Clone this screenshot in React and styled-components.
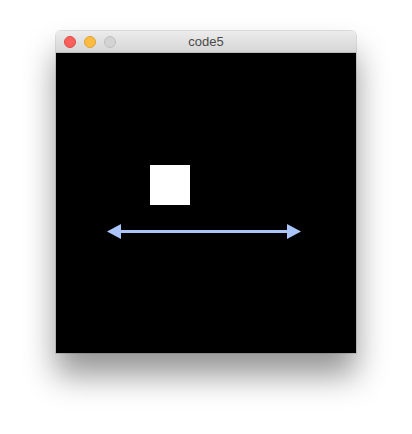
import React from 'react';
import styled, { createGlobalStyle } from 'styled-components';

const GlobalStyle = createGlobalStyle`
  html, body {
    margin: 0;
    padding: 0;
    background: #ffffff;
  }
`;

const Page = styled.div`
  width: 412px;
  height: 434px;
  display: flex;
  justify-content: center;
  align-items: flex-start;
  padding-top: 31px;
  box-sizing: border-box;
`;

const Window = styled.div`
  width: 300px;
  display: flex;
  flex-direction: column;
  border-radius: 5px 5px 0 0;
  box-shadow: 0 0 0 1px rgba(0, 0, 0, 0.12), 0 22px 32px rgba(0, 0, 0, 0.42);
`;

const TitleBar = styled.div`
  position: relative;
  height: 22px;
  display: flex;
  align-items: center;
  justify-content: center;
  border-radius: 5px 5px 0 0;
  background: linear-gradient(#ececec, #d6d6d6);
  border-bottom: 1px solid #b8b8b8;
  box-sizing: border-box;
  font-family: "Liberation Sans", Arial, sans-serif;
  font-size: 13px;
  color: #4a4a4a;
`;

const Lights = styled.div`
  position: absolute;
  left: 8px;
  top: 0;
  bottom: 0;
  display: flex;
  align-items: center;
  gap: 8px;
`;

const Light = styled.span`
  width: 12px;
  height: 12px;
  border-radius: 50%;
  box-sizing: border-box;
  background: ${p => p.color};
  border: 0.5px solid ${p => p.edge};
`;

const Canvas = styled.svg`
  display: block;
  width: 300px;
  height: 300px;
  background: #000000;
`;

const ARROW = '#a9c5fa';

export default function App() {
  return (
    <>
      <GlobalStyle />
      <Page>
        <Window>
          <TitleBar>
            <Lights>
              <Light color="#fc605c" edge="#de4a45" />
              <Light color="#fdbc40" edge="#dea236" />
              <Light color="#d3d3d3" edge="#c0c0c0" />
            </Lights>
            code5
          </TitleBar>
          <Canvas viewBox="0 0 300 300">
            <rect x="94" y="112" width="40" height="40" fill="#ffffff" />
            <line x1="62" y1="178.5" x2="234" y2="178.5" stroke={ARROW} strokeWidth="3" />
            <polygon points="51,178.5 65,171 65,186" fill={ARROW} />
            <polygon points="245,178.5 231,171 231,186" fill={ARROW} />
          </Canvas>
        </Window>
      </Page>
    </>
  );
}
